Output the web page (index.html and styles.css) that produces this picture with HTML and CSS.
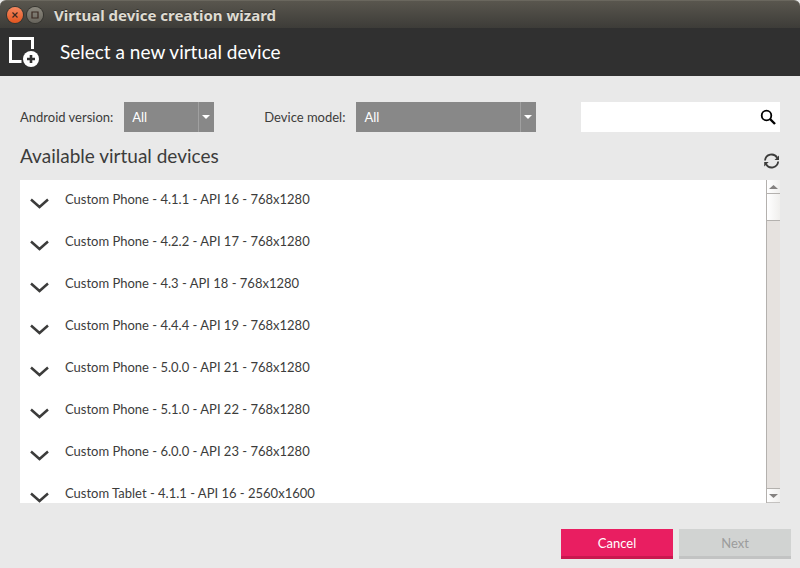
FILE: index.html
```html
<!DOCTYPE html>
<html lang="en">
<head>
    <meta charset="utf-8">
    <title>Virtual device creation wizard</title>
    <link rel="stylesheet" href="styles.css">
</head>
<body>
    <div class="title-bar">
        <button class="window-button close" aria-label="Close">
            <svg width="16" height="16" viewBox="0 0 16 16"><path d="M5.5 5.5l5 5M10.5 5.5l-5 5"/></svg>
        </button>
        <button class="window-button maximize" aria-label="Maximize">
            <svg width="16" height="16" viewBox="0 0 16 16"><path d="M5 5h6v6H5z"/></svg>
        </button>
        <span class="window-title">Virtual device creation wizard</span>
    </div>

    <header class="header">
        <svg class="header-icon" width="32" height="32" viewBox="0 0 32 32">
            <path d="M13.5 26.5H2.500V3.500H24.500V14" fill="none" stroke="#fff" stroke-width="3"/>
            <circle cx="23" cy="24" r="8" fill="#fff"/>
            <path d="M23 20v8M19 24h8" stroke="#303030" stroke-width="2.6"/>
        </svg>
        <h1>Select a new virtual device</h1>
    </header>

    <main class="content">
        <div class="filters">
            <label for="version">Android version:</label>
            <select id="version" class="version">
                <option>All</option>
            </select>
            <label for="model" class="model-label">Device model:</label>
            <select id="model" class="model">
                <option>All</option>
            </select>
            <div class="search">
                <input type="text" aria-label="Search">
                <svg width="16" height="16" viewBox="0 0 16 16" fill="none" stroke="#000">
                    <circle cx="6.5" cy="6.5" r="4.8" stroke-width="1.8"/>
                    <path d="M10 10l5 5" stroke-width="2.4"/>
                </svg>
            </div>
        </div>

        <div class="list-heading">
            <h2>Available virtual devices</h2>
            <button class="refresh" aria-label="Refresh">
                <svg width="16" height="16" viewBox="0 0 16 16">
                    <path d="M1 7.5A6.6 6.6 0 0 1 13.2 4.700M14.200 8.500A6.600 6.600 0 0 1 2 11.300" fill="none" stroke="#3c3c3b" stroke-width="1.8"/>
                    <path d="M15 2.500V7h-4.500zM.2 13.500V9h4.500z" fill="#3c3c3b"/>
                </svg>
            </button>
        </div>

        <div class="device-box">
            <ul class="devices">
                <li><button class="expand" aria-label="Expand"><svg width="20" height="12" viewBox="0 0 20 12"><path d="M1 1.5l8.500 7.500L18 1.5"/></svg></button>Custom Phone - 4.1.1 - API 16 - 768x1280</li>
                <li><button class="expand" aria-label="Expand"><svg width="20" height="12" viewBox="0 0 20 12"><path d="M1 1.5l8.500 7.500L18 1.5"/></svg></button>Custom Phone - 4.2.2 - API 17 - 768x1280</li>
                <li><button class="expand" aria-label="Expand"><svg width="20" height="12" viewBox="0 0 20 12"><path d="M1 1.5l8.500 7.500L18 1.5"/></svg></button>Custom Phone - 4.3 - API 18 - 768x1280</li>
                <li><button class="expand" aria-label="Expand"><svg width="20" height="12" viewBox="0 0 20 12"><path d="M1 1.5l8.500 7.500L18 1.5"/></svg></button>Custom Phone - 4.4.4 - API 19 - 768x1280</li>
                <li><button class="expand" aria-label="Expand"><svg width="20" height="12" viewBox="0 0 20 12"><path d="M1 1.5l8.500 7.500L18 1.5"/></svg></button>Custom Phone - 5.0.0 - API 21 - 768x1280</li>
                <li><button class="expand" aria-label="Expand"><svg width="20" height="12" viewBox="0 0 20 12"><path d="M1 1.5l8.500 7.500L18 1.5"/></svg></button>Custom Phone - 5.1.0 - API 22 - 768x1280</li>
                <li><button class="expand" aria-label="Expand"><svg width="20" height="12" viewBox="0 0 20 12"><path d="M1 1.5l8.500 7.500L18 1.5"/></svg></button>Custom Phone - 6.0.0 - API 23 - 768x1280</li>
                <li><button class="expand" aria-label="Expand"><svg width="20" height="12" viewBox="0 0 20 12"><path d="M1 1.5l8.500 7.500L18 1.5"/></svg></button>Custom Tablet - 4.1.1 - API 16 - 2560x1600</li>
            </ul>
            <div class="scrollbar">
                <button class="scroll-arrow up" aria-label="Scroll up"><svg width="9" height="4" viewBox="0 0 9 4"><path d="M0 4l4.500-4L9 4z"/></svg></button>
                <div class="scroll-thumb"></div>
                <button class="scroll-arrow down" aria-label="Scroll down"><svg width="9" height="4" viewBox="0 0 9 4"><path d="M0 0l4.500 4L9 0z"/></svg></button>
            </div>
        </div>
    </main>

    <footer class="footer">
        <button class="button cancel">Cancel</button>
        <button class="button next" disabled>Next</button>
    </footer>
</body>
</html>
```
FILE: styles.css
```css
* {
    box-sizing: border-box;
}

body {
    display: flex;
    flex-direction: column;
    height: 100vh;
    margin: 0;
    background: #e9e9e9;
    color: #3c3c3b;
    font-family: Lato, sans-serif;
    font-size: 13px;
}

button {
    padding: 0;
    border: none;
    background: none;
    font: inherit;
}

svg {
    display: block;
}

.title-bar {
    display: flex;
    align-items: center;
    gap: 4px;
    height: 28px;
    padding: 0 7px;
    border-top: 1px solid #6a675e;
    border-radius: 6px 6px 0 0;
    background: linear-gradient(#59564e, #3d3c38);
}

.window-button {
    width: 16px;
    height: 16px;
    border-radius: 50%;
    box-shadow: 0 0 0 1px #35342f;
}

.window-button path {
    fill: none;
    stroke: #3b2a22;
    stroke-width: 1.2;
}

.close {
    background: linear-gradient(#f58860, #e2551f);
}

.maximize {
    background: linear-gradient(#8b887e, #67645c);
}

.window-title {
    margin-left: 7px;
    color: #dfdbd2;
    font-family: "Noto Sans", sans-serif;
    font-size: 15px;
    font-weight: bold;
    line-height: 20px;
    text-shadow: 0 -1px #33322e;
}

.header {
    display: flex;
    align-items: center;
    gap: 20px;
    height: 48px;
    padding: 0 8px 2px;
    background: #303030;
    color: #fff;
}

h1,
h2 {
    margin: 0;
    font-size: 19px;
    font-weight: normal;
}

.content {
    display: flex;
    flex: 1;
    flex-direction: column;
    min-height: 0;
    padding: 26px 20px 0;
}

.filters {
    display: flex;
    align-items: center;
    height: 30px;
}

.filters select {
    height: 30px;
    margin-left: 11px;
    padding: 0 24px 0 8px;
    border: none;
    border-radius: 0;
    appearance: none;
    background-color: #888;
    background-image: url("data:image/svg+xml,%3Csvg xmlns='http://www.w3.org/2000/svg' width='16' height='30'%3E%3Cpath d='M.5 0v30' stroke='%23a0a0a0'/%3E%3Cpath d='M4 13h8l-4 4z' fill='%23fff'/%3E%3C/svg%3E");
    background-position: right;
    background-repeat: no-repeat;
    color: #fff;
    font: inherit;
}

.version {
    width: 90px;
}

.model {
    width: 180px;
}

.model-label {
    margin-left: 50px;
}

.search {
    display: flex;
    flex: 1;
    align-items: center;
    height: 30px;
    margin-left: 45px;
    padding-right: 4px;
    background: #fff;
}

.search input {
    flex: 1;
    min-width: 0;
    height: 30px;
    padding: 0 8px;
    border: none;
    background: none;
    font: inherit;
}

.list-heading {
    display: flex;
    align-items: center;
    justify-content: space-between;
    height: 48px;
    padding-bottom: 2px;
}

.refresh {
    padding-top: 12px;
}

.device-box {
    display: flex;
    flex: 1;
    min-height: 0;
    background: #fff;
}

.devices {
    flex: 1;
    margin: 0;
    padding: 0;
    overflow: hidden;
    list-style: none;
}

.devices li {
    display: flex;
    gap: 15px;
    height: 42px;
    padding: 11px 10px 0;
    line-height: 16px;
}

.expand {
    height: 12px;
    margin-top: 7px;
}

.expand path {
    fill: none;
    stroke: #3c3c3b;
    stroke-width: 2.5;
}

.scrollbar {
    display: flex;
    flex-direction: column;
    width: 14px;
    border-left: 1px solid #b4b1ae;
    background: #e6e2df;
}

.scroll-arrow {
    display: flex;
    align-items: center;
    justify-content: center;
    height: 14px;
    background: linear-gradient(to right, #fff, #f0efed);
}

.scroll-arrow path {
    fill: #858280;
}

.up {
    border-bottom: 1px solid #b4b1ae;
}

.down {
    height: 15px;
    margin-top: auto;
    border-top: 1px solid #b4b1ae;
    border-bottom: 1px solid #c4c2c0;
}

.scroll-thumb {
    height: 27px;
    border-bottom: 1px solid #b4b1ae;
    background: linear-gradient(to right, #fff, #f0efed);
}

.footer {
    display: flex;
    justify-content: flex-end;
    gap: 6px;
    padding: 26px 9px 9px;
}

.button {
    width: 112px;
    height: 30px;
    border-bottom: 3px solid;
}

.cancel {
    border-color: #c9184f;
    background: #e91e61;
    color: #fff;
}

.next {
    border-color: #c2c3c3;
    background: #d1d3d2;
    color: #9c9c9c;
}
```
